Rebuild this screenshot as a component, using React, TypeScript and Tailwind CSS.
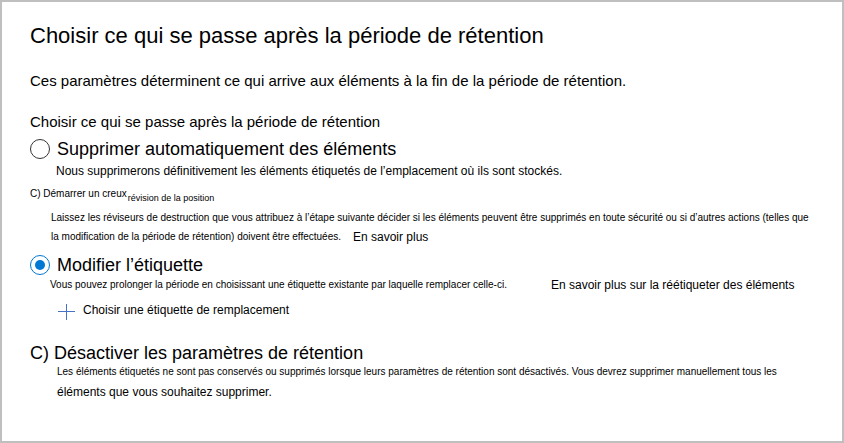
import { useState, type ReactNode } from "react";

type Choice = "delete" | "review" | "relabel" | "deactivate";

interface OptionProps {
  value: Choice;
  selected: Choice;
  onSelect: (value: Choice) => void;
  children: ReactNode;
}

function RadioOption({ value, selected, onSelect, children }: OptionProps) {
  return (
    <label className="flex items-center gap-[7px] text-[18px] leading-[22px]">
      <input
        type="radio"
        name="after-retention"
        value={value}
        checked={selected === value}
        onChange={() => onSelect(value)}
        className="size-5 shrink-0 appearance-none rounded-full border border-[#333333] bg-white bg-clip-content p-1 checked:border-[#0078d4] checked:bg-[#0078d4]"
      />
      {children}
    </label>
  );
}

function LetterOption({ value, selected, onSelect, children }: OptionProps) {
  return (
    <label className="relative block">
      <input
        type="radio"
        name="after-retention"
        value={value}
        checked={selected === value}
        onChange={() => onSelect(value)}
        className="sr-only"
      />
      {children}
    </label>
  );
}

export default function App() {
  const [choice, setChoice] = useState<Choice>("relabel");

  return (
    <main className="min-h-screen border-2 border-[#bfbfbf] bg-white pt-5 pr-7 pb-6 pl-7 font-['Liberation_Sans',Arial,sans-serif] text-black">
      <h1 className="text-[22px] leading-7">Choisir ce qui se passe après la période de rétention</h1>
      <p className="mt-5 text-[15px] leading-[22px]">
        Ces paramètres déterminent ce qui arrive aux éléments à la fin de la période de rétention.
      </p>

      <fieldset className="mt-5">
        <legend className="text-[15px] leading-5">Choisir ce qui se passe après la période de rétention</legend>

        <section className="pt-[6px]">
          <RadioOption value="delete" selected={choice} onSelect={setChoice}>
            Supprimer automatiquement des éléments
          </RadioOption>
          <p className="pl-[26px] text-[12px] leading-[22px]">
            Nous supprimerons définitivement les éléments étiquetés de l’emplacement où ils sont stockés.
          </p>
        </section>

        <section className="pt-1">
          <LetterOption value="review" selected={choice} onSelect={setChoice}>
            <span className="flex items-start gap-px text-[10px] leading-4">
              <span>C) Démarrer un creux</span>
              <span className="pt-1 text-[9px]">révision de la position</span>
            </span>
          </LetterOption>
          <p className="pt-[2px] pl-[21px] text-[10px] leading-[19px]">
            Laissez les réviseurs de destruction que vous attribuez à l’étape suivante décider si les éléments peuvent être
            supprimés en toute sécurité ou si d’autres actions (telles que
            <span className="flex gap-3">
              la modification de la période de rétention) doivent être effectuées.
              <a href="#revision" className="text-[12px] leading-5">
                En savoir plus
              </a>
            </span>
          </p>
        </section>

        <section className="pt-[7px]">
          <RadioOption value="relabel" selected={choice} onSelect={setChoice}>
            Modifier l’étiquette
          </RadioOption>
          <p className="flex gap-11 pl-5 text-[10px] leading-[18px]">
            Vous pouvez prolonger la période en choisissant une étiquette existante par laquelle remplacer celle-ci.
            <a href="#etiquettes" className="text-[12px]">
              En savoir plus sur la réétiqueter des éléments
            </a>
          </p>
          <button type="button" className="mt-2 ml-7 flex items-start gap-2 text-[12px] leading-4">
            <svg viewBox="0 0 17 17" className="mt-px size-[17px]" fill="none" stroke="#4472c4" aria-hidden="true">
              <path d="M8.5 1v16M0 8.5h17" />
            </svg>
            Choisir une étiquette de remplacement
          </button>
        </section>

        <section className="pt-[22px]">
          <LetterOption value="deactivate" selected={choice} onSelect={setChoice}>
            <span className="block text-[18px] leading-[22px]">C) Désactiver les paramètres de rétention</span>
          </LetterOption>
          <p className="pl-[27px] text-[10px] leading-4">
            Les éléments étiquetés ne sont pas conservés ou supprimés lorsque leurs paramètres de rétention sont
            désactivés. Vous devrez supprimer manuellement tous les
            <span className="block text-[12px] leading-6">éléments que vous souhaitez supprimer.</span>
          </p>
        </section>
      </fieldset>
    </main>
  );
}
